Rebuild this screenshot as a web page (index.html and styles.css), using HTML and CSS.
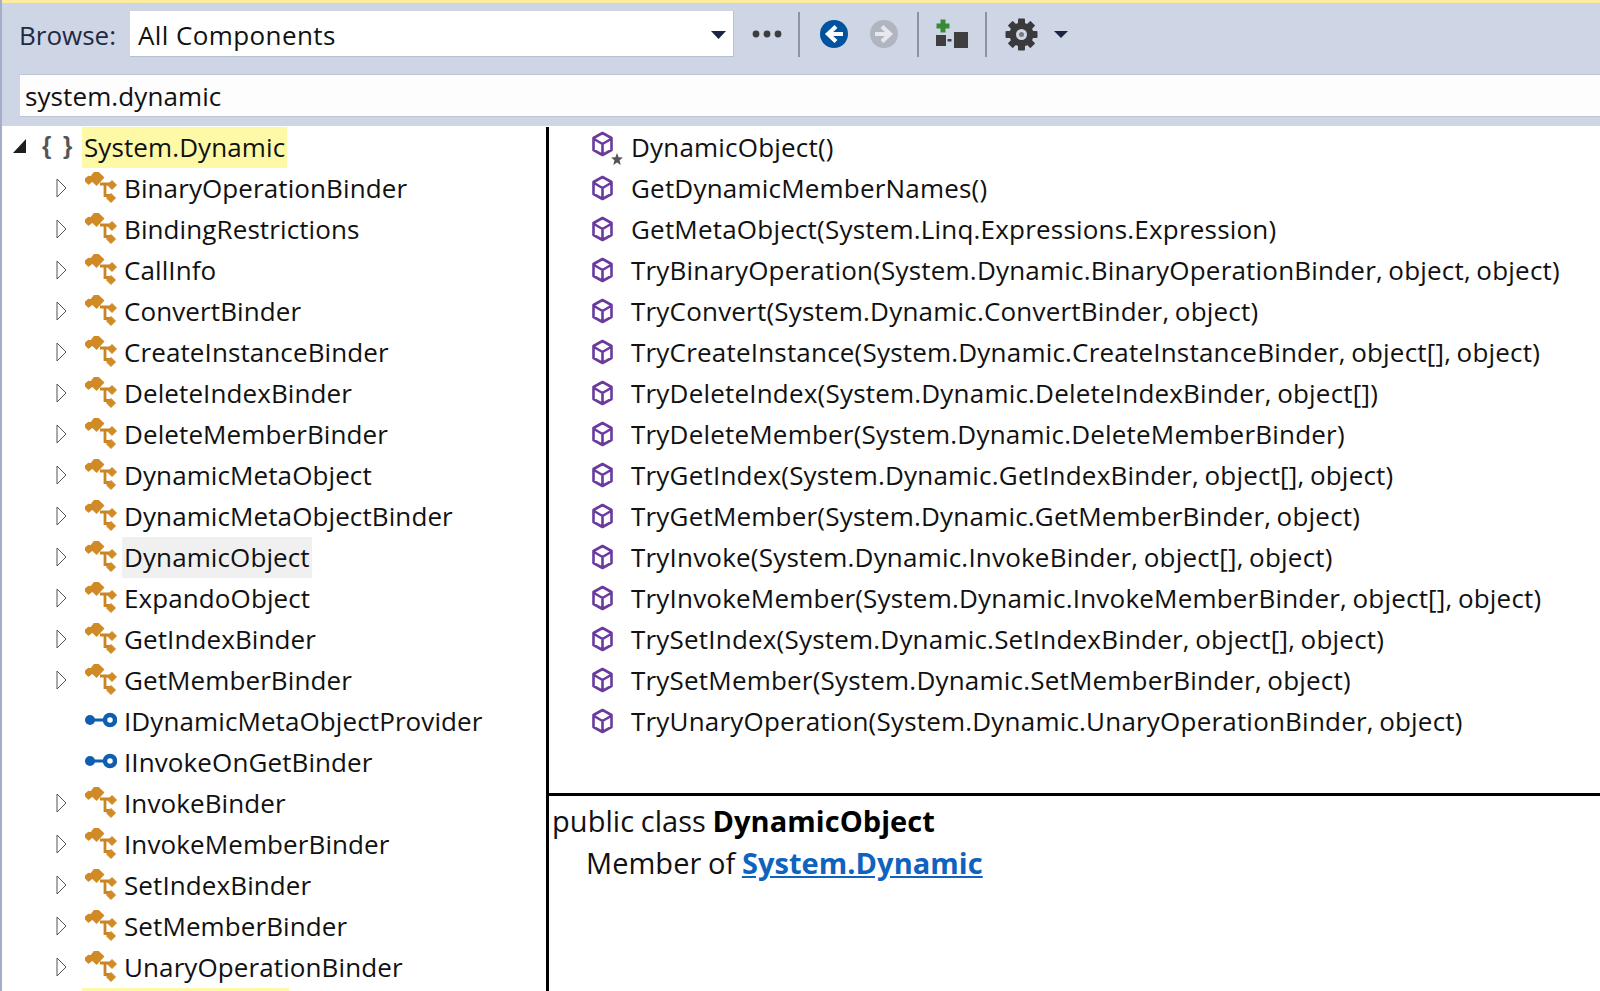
FILE: index.html
```html
<!DOCTYPE html>
<html lang="en">
<head>
<meta charset="utf-8">
<title>Object Browser</title>
<link rel="stylesheet" href="styles.css">
</head>
<body>
<svg class="defs" width="0" height="0">
  <symbol id="cls" viewBox="0 0 32 32">
    <path d="M15 12 H25 M20 12 V23.500 H25" fill="none" stroke="#c98524" stroke-width="2.800"/>
    <path d="M11 -1.500 L18.500 5.500 L11.500 13 L7.500 9 L3.500 12 L-0.500 8 L3.500 4.500 L6 5Z" fill="#d08a26" stroke="#d08a26" stroke-width="1.500" stroke-linejoin="round"/>
    <path d="M27 8.500 L31.500 13 L27 17.500 L22.500 13Z" fill="#d08a26" stroke="#d08a26" stroke-width="1" stroke-linejoin="round"/>
    <path d="M26 21.500 L30.500 26 L26 30.500 L21.500 26Z" fill="#d08a26" stroke="#d08a26" stroke-width="1" stroke-linejoin="round"/>
  </symbol>
  <symbol id="mth" viewBox="0 0 24 26">
    <path d="M11.500 2 L20.500 7 V19 L11.500 24 L2.500 19 V7Z M3 8 L11.500 13 L20 8 M11.500 13 V24" fill="none" stroke="#6a3a9f" stroke-width="2.600" stroke-linejoin="round"/>
  </symbol>
  <symbol id="ifc" viewBox="0 0 32 16">
    <circle cx="5" cy="8" r="5" fill="#0f5fae"/>
    <path d="M8 8 H20" stroke="#0f5fae" stroke-width="3"/>
    <circle cx="25" cy="8" r="5" fill="none" stroke="#0f5fae" stroke-width="4.500"/>
  </symbol>
  <symbol id="exp" viewBox="0 0 11 20">
    <path d="M1 1 L10 10 L1 19Z" fill="#fff" stroke="#555" stroke-width="1"/>
  </symbol>
</svg>
<div class="window">
  <header class="head">
    <div class="toolbar">
      <span class="browse-label">Browse:</span>
      <div class="dropdown">
        <span>All Components</span>
        <svg class="drop-caret" width="15" height="8" viewBox="0 0 15 8"><path d="M0 0H15L7.500 8Z" fill="#1b2440"/></svg>
      </div>
      <svg class="dots" width="30" height="8" viewBox="0 0 30 8"><circle cx="4" cy="4" r="3.400" fill="#3d3d3f"/><circle cx="15" cy="4" r="3.400" fill="#3d3d3f"/><circle cx="26" cy="4" r="3.400" fill="#3d3d3f"/></svg>
      <i class="sep sep-a"></i>
      <svg class="nav nav-back" width="28" height="28" viewBox="0 0 28 28"><circle cx="14" cy="14" r="14" fill="#00539c"/><path d="M16 6.500 L8 14 L16 21.500 M9 14 H23" fill="none" stroke="#fff" stroke-width="4.200"/></svg>
      <svg class="nav nav-fwd" width="28" height="28" viewBox="0 0 28 28"><circle cx="14" cy="14" r="14" fill="#b1b5bf"/><path d="M12 6.500 L20 14 L12 21.500 M5 14 H19" fill="none" stroke="#e6e8ee" stroke-width="4.200"/></svg>
      <i class="sep sep-b"></i>
      <svg class="addref" width="34" height="32" viewBox="0 0 34 32"><path d="M8 1.500 V14.500 M1.500 8 H14.500" stroke="#388a34" stroke-width="5"/><rect x="1" y="17" width="10" height="11" fill="#3f3f41"/><rect x="12.500" y="21" width="4" height="2.500" fill="#3f3f41"/><rect x="19" y="14" width="14" height="16" fill="#3f3f41"/></svg>
      <i class="sep sep-c"></i>
      <svg class="gear" width="33" height="33" viewBox="0 0 33 33"><g fill="#3a3a3c"><circle cx="16.500" cy="16.500" r="12"/><rect x="13" y="0.500" width="7" height="32" rx="1"/><rect x="13" y="0.500" width="7" height="32" rx="1" transform="rotate(45 16.500 16.500)"/><rect x="13" y="0.500" width="7" height="32" rx="1" transform="rotate(90 16.500 16.500)"/><rect x="13" y="0.500" width="7" height="32" rx="1" transform="rotate(135 16.500 16.500)"/></g><circle cx="16.500" cy="16.500" r="5.500" fill="#ced6e6"/><circle cx="16.500" cy="16.500" r="2.500" fill="#77797f"/></svg>
      <svg class="gear-caret" width="14" height="7" viewBox="0 0 14 7"><path d="M0 0H14L7 7Z" fill="#1b2440"/></svg>
    </div>
    <div class="search">system.dynamic</div>
  </header>
  <main class="split">
    <nav class="tree">
      <div class="row root">
        <svg class="open-tri" width="13" height="14" viewBox="0 0 13 14"><path d="M13 0 V14 H0Z" fill="#1e1e1e"/></svg>
        <span class="braces">{ }</span>
        <span class="label hl">System.Dynamic</span>
      </div>
      <div class="row"><svg class="expander"><use href="#exp"/></svg><svg class="ico"><use href="#cls"/></svg><span class="label">BinaryOperationBinder</span></div>
      <div class="row"><svg class="expander"><use href="#exp"/></svg><svg class="ico"><use href="#cls"/></svg><span class="label">BindingRestrictions</span></div>
      <div class="row"><svg class="expander"><use href="#exp"/></svg><svg class="ico"><use href="#cls"/></svg><span class="label">CallInfo</span></div>
      <div class="row"><svg class="expander"><use href="#exp"/></svg><svg class="ico"><use href="#cls"/></svg><span class="label">ConvertBinder</span></div>
      <div class="row"><svg class="expander"><use href="#exp"/></svg><svg class="ico"><use href="#cls"/></svg><span class="label">CreateInstanceBinder</span></div>
      <div class="row"><svg class="expander"><use href="#exp"/></svg><svg class="ico"><use href="#cls"/></svg><span class="label">DeleteIndexBinder</span></div>
      <div class="row"><svg class="expander"><use href="#exp"/></svg><svg class="ico"><use href="#cls"/></svg><span class="label">DeleteMemberBinder</span></div>
      <div class="row"><svg class="expander"><use href="#exp"/></svg><svg class="ico"><use href="#cls"/></svg><span class="label">DynamicMetaObject</span></div>
      <div class="row"><svg class="expander"><use href="#exp"/></svg><svg class="ico"><use href="#cls"/></svg><span class="label">DynamicMetaObjectBinder</span></div>
      <div class="row"><svg class="expander"><use href="#exp"/></svg><svg class="ico"><use href="#cls"/></svg><span class="label sel">DynamicObject</span></div>
      <div class="row"><svg class="expander"><use href="#exp"/></svg><svg class="ico"><use href="#cls"/></svg><span class="label">ExpandoObject</span></div>
      <div class="row"><svg class="expander"><use href="#exp"/></svg><svg class="ico"><use href="#cls"/></svg><span class="label">GetIndexBinder</span></div>
      <div class="row"><svg class="expander"><use href="#exp"/></svg><svg class="ico"><use href="#cls"/></svg><span class="label">GetMemberBinder</span></div>
      <div class="row"><span class="expander"></span><svg class="ico ico-ifc"><use href="#ifc"/></svg><span class="label">IDynamicMetaObjectProvider</span></div>
      <div class="row"><span class="expander"></span><svg class="ico ico-ifc"><use href="#ifc"/></svg><span class="label">IInvokeOnGetBinder</span></div>
      <div class="row"><svg class="expander"><use href="#exp"/></svg><svg class="ico"><use href="#cls"/></svg><span class="label">InvokeBinder</span></div>
      <div class="row"><svg class="expander"><use href="#exp"/></svg><svg class="ico"><use href="#cls"/></svg><span class="label">InvokeMemberBinder</span></div>
      <div class="row"><svg class="expander"><use href="#exp"/></svg><svg class="ico"><use href="#cls"/></svg><span class="label">SetIndexBinder</span></div>
      <div class="row"><svg class="expander"><use href="#exp"/></svg><svg class="ico"><use href="#cls"/></svg><span class="label">SetMemberBinder</span></div>
      <div class="row"><svg class="expander"><use href="#exp"/></svg><svg class="ico"><use href="#cls"/></svg><span class="label">UnaryOperationBinder</span></div>
      <div class="row-stub"></div>
    </nav>
    <section class="right">
      <div class="members">
        <div class="member"><span class="m-ico ctor"><svg class="mi"><use href="#mth"/></svg><svg class="star" width="12" height="12" viewBox="0 0 12 12"><path d="M6 0 L7.600 4.200 L12 4.500 L8.600 7.300 L9.700 12 L6 9.400 L2.300 12 L3.400 7.300 L0 4.500 L4.400 4.200Z" fill="#555"/></svg></span><span>DynamicObject()</span></div>
        <div class="member"><span class="m-ico"><svg class="mi"><use href="#mth"/></svg></span><span>GetDynamicMemberNames()</span></div>
        <div class="member"><span class="m-ico"><svg class="mi"><use href="#mth"/></svg></span><span>GetMetaObject(System.Linq.Expressions.Expression)</span></div>
        <div class="member"><span class="m-ico"><svg class="mi"><use href="#mth"/></svg></span><span>TryBinaryOperation(System.Dynamic.BinaryOperationBinder, object, object)</span></div>
        <div class="member"><span class="m-ico"><svg class="mi"><use href="#mth"/></svg></span><span>TryConvert(System.Dynamic.ConvertBinder, object)</span></div>
        <div class="member"><span class="m-ico"><svg class="mi"><use href="#mth"/></svg></span><span>TryCreateInstance(System.Dynamic.CreateInstanceBinder, object[], object)</span></div>
        <div class="member"><span class="m-ico"><svg class="mi"><use href="#mth"/></svg></span><span>TryDeleteIndex(System.Dynamic.DeleteIndexBinder, object[])</span></div>
        <div class="member"><span class="m-ico"><svg class="mi"><use href="#mth"/></svg></span><span>TryDeleteMember(System.Dynamic.DeleteMemberBinder)</span></div>
        <div class="member"><span class="m-ico"><svg class="mi"><use href="#mth"/></svg></span><span>TryGetIndex(System.Dynamic.GetIndexBinder, object[], object)</span></div>
        <div class="member"><span class="m-ico"><svg class="mi"><use href="#mth"/></svg></span><span>TryGetMember(System.Dynamic.GetMemberBinder, object)</span></div>
        <div class="member"><span class="m-ico"><svg class="mi"><use href="#mth"/></svg></span><span>TryInvoke(System.Dynamic.InvokeBinder, object[], object)</span></div>
        <div class="member"><span class="m-ico"><svg class="mi"><use href="#mth"/></svg></span><span>TryInvokeMember(System.Dynamic.InvokeMemberBinder, object[], object)</span></div>
        <div class="member"><span class="m-ico"><svg class="mi"><use href="#mth"/></svg></span><span>TrySetIndex(System.Dynamic.SetIndexBinder, object[], object)</span></div>
        <div class="member"><span class="m-ico"><svg class="mi"><use href="#mth"/></svg></span><span>TrySetMember(System.Dynamic.SetMemberBinder, object)</span></div>
        <div class="member"><span class="m-ico"><svg class="mi"><use href="#mth"/></svg></span><span>TryUnaryOperation(System.Dynamic.UnaryOperationBinder, object)</span></div>
      </div>
      <div class="details">
        <div>public class <b>DynamicObject</b></div>
        <div class="member-of">Member of <a href="#">System.Dynamic</a></div>
      </div>
    </section>
  </main>
</div>
</body>
</html>
```
FILE: styles.css
```css
* { box-sizing: border-box; }
html, body { margin: 0; height: 100%; overflow: hidden; background: #fff; }
body {
  font-family: "Open Sans", "Noto Sans", sans-serif;
  font-size: 26px;
  letter-spacing: 0.1px;
  color: #111;
}
.defs { position: absolute; }
.window {
  height: 991px;
  display: flex;
  flex-direction: column;
  border-left: 2px solid #a4aecb;
}
.head {
  height: 126px;
  flex: none;
  background: #ced6e6;
  border-top: 3px solid #fdeb9f;
  padding-left: 18px;
}
.toolbar { height: 71px; display: flex; align-items: flex-start; }
.browse-label { width: 110px; margin: 14px 0 0 -1px; flex: none; line-height: 36px; color: #1e2a44; letter-spacing: 0; }
.dropdown {
  width: 604px;
  height: 46px;
  margin: 8px 0 0 1px;
  background: #fff;
  border-bottom: 1px solid #b8c0d2;
  border-right: 1px solid #b8c0d2;
  display: flex;
  align-items: center;
  justify-content: space-between;
  padding: 2px 7px 0 8px;
  letter-spacing: 0.4px;
}
.drop-caret { flex: none; }
.dots { margin: 27px 0 0 18px; flex: none; }
.sep { width: 2px; height: 45px; margin-top: 9px; background: #8f939d; flex: none; }
.sep-a { margin-left: 16px; }
.nav { margin-top: 17px; flex: none; }
.nav-back { margin-left: 20px; }
.nav-fwd { margin-left: 22px; }
.sep-b { margin-left: 19px; }
.addref { margin: 15px 0 0 16px; flex: none; }
.sep-c { margin-left: 16px; }
.gear { margin: 15px 0 0 18px; flex: none; }
.gear-caret { margin: 28px 0 0 16px; flex: none; }
.search {
  height: 43px;
  background: #fdfdfd;
  border-top: 1px solid #bcc3d3;
  border-bottom: 1px solid #bcc3d3;
  padding-left: 5px;
  line-height: 43px;
}
.split { flex: 1; min-height: 0; display: flex; padding-top: 1px; }
.tree {
  width: 547px;
  flex: none;
  height: 100%;
  overflow: hidden;
  border-right: 3px solid #000;
}
.row { height: 41px; display: flex; align-items: center; padding-left: 54px; }
.root { padding-left: 11px; }
.open-tri { flex: none; margin: -4px 16px 0 0; }
.braces {
  width: 40px;
  flex: none;
  font-family: "Liberation Sans", sans-serif;
  font-weight: 700;
  font-size: 24px;
  letter-spacing: 0;
  word-spacing: 5px;
  color: #555;
  white-space: pre;
  margin-top: -3px;
}
.expander { width: 11px; height: 20px; flex: none; margin: -2px 18px 0 0; }
.ico { width: 32px; height: 32px; flex: none; margin-right: 5px; margin-top: -1px; overflow: visible; }
.ico-ifc { height: 16px; margin-top: -4px; }
.label { line-height: 41px; padding: 0 2px; white-space: nowrap; }
.hl { background: #fdf9a6; }
.sel { background: #f0f0f0; }
.row-stub { width: 207px; height: 41px; margin-left: 80px; background: #fdf9a6; }
.right { flex: 1; display: flex; flex-direction: column; min-width: 0; }
.members { height: 669px; flex: none; border-bottom: 3px solid #000; letter-spacing: 0.2px; word-spacing: -1.5px; }
.member { height: 41px; display: flex; align-items: flex-start; white-space: nowrap; line-height: 41px; }
.m-ico { width: 82px; flex: none; height: 41px; padding: 7px 0 0 42px; position: relative; }
.mi { width: 24px; height: 26px; display: block; }
.ctor .mi { margin-top: -3px; }
.star { position: absolute; left: 62px; top: 26px; }
.details { padding: 4px 0 0 3px; line-height: 42px; font-size: 29px; letter-spacing: 0.05px; word-spacing: -1px; }
.member-of { padding-left: 34px; }
.details a { color: #0f62bd; font-weight: 700; }
.details b { font-weight: 700; color: #000; }
```
